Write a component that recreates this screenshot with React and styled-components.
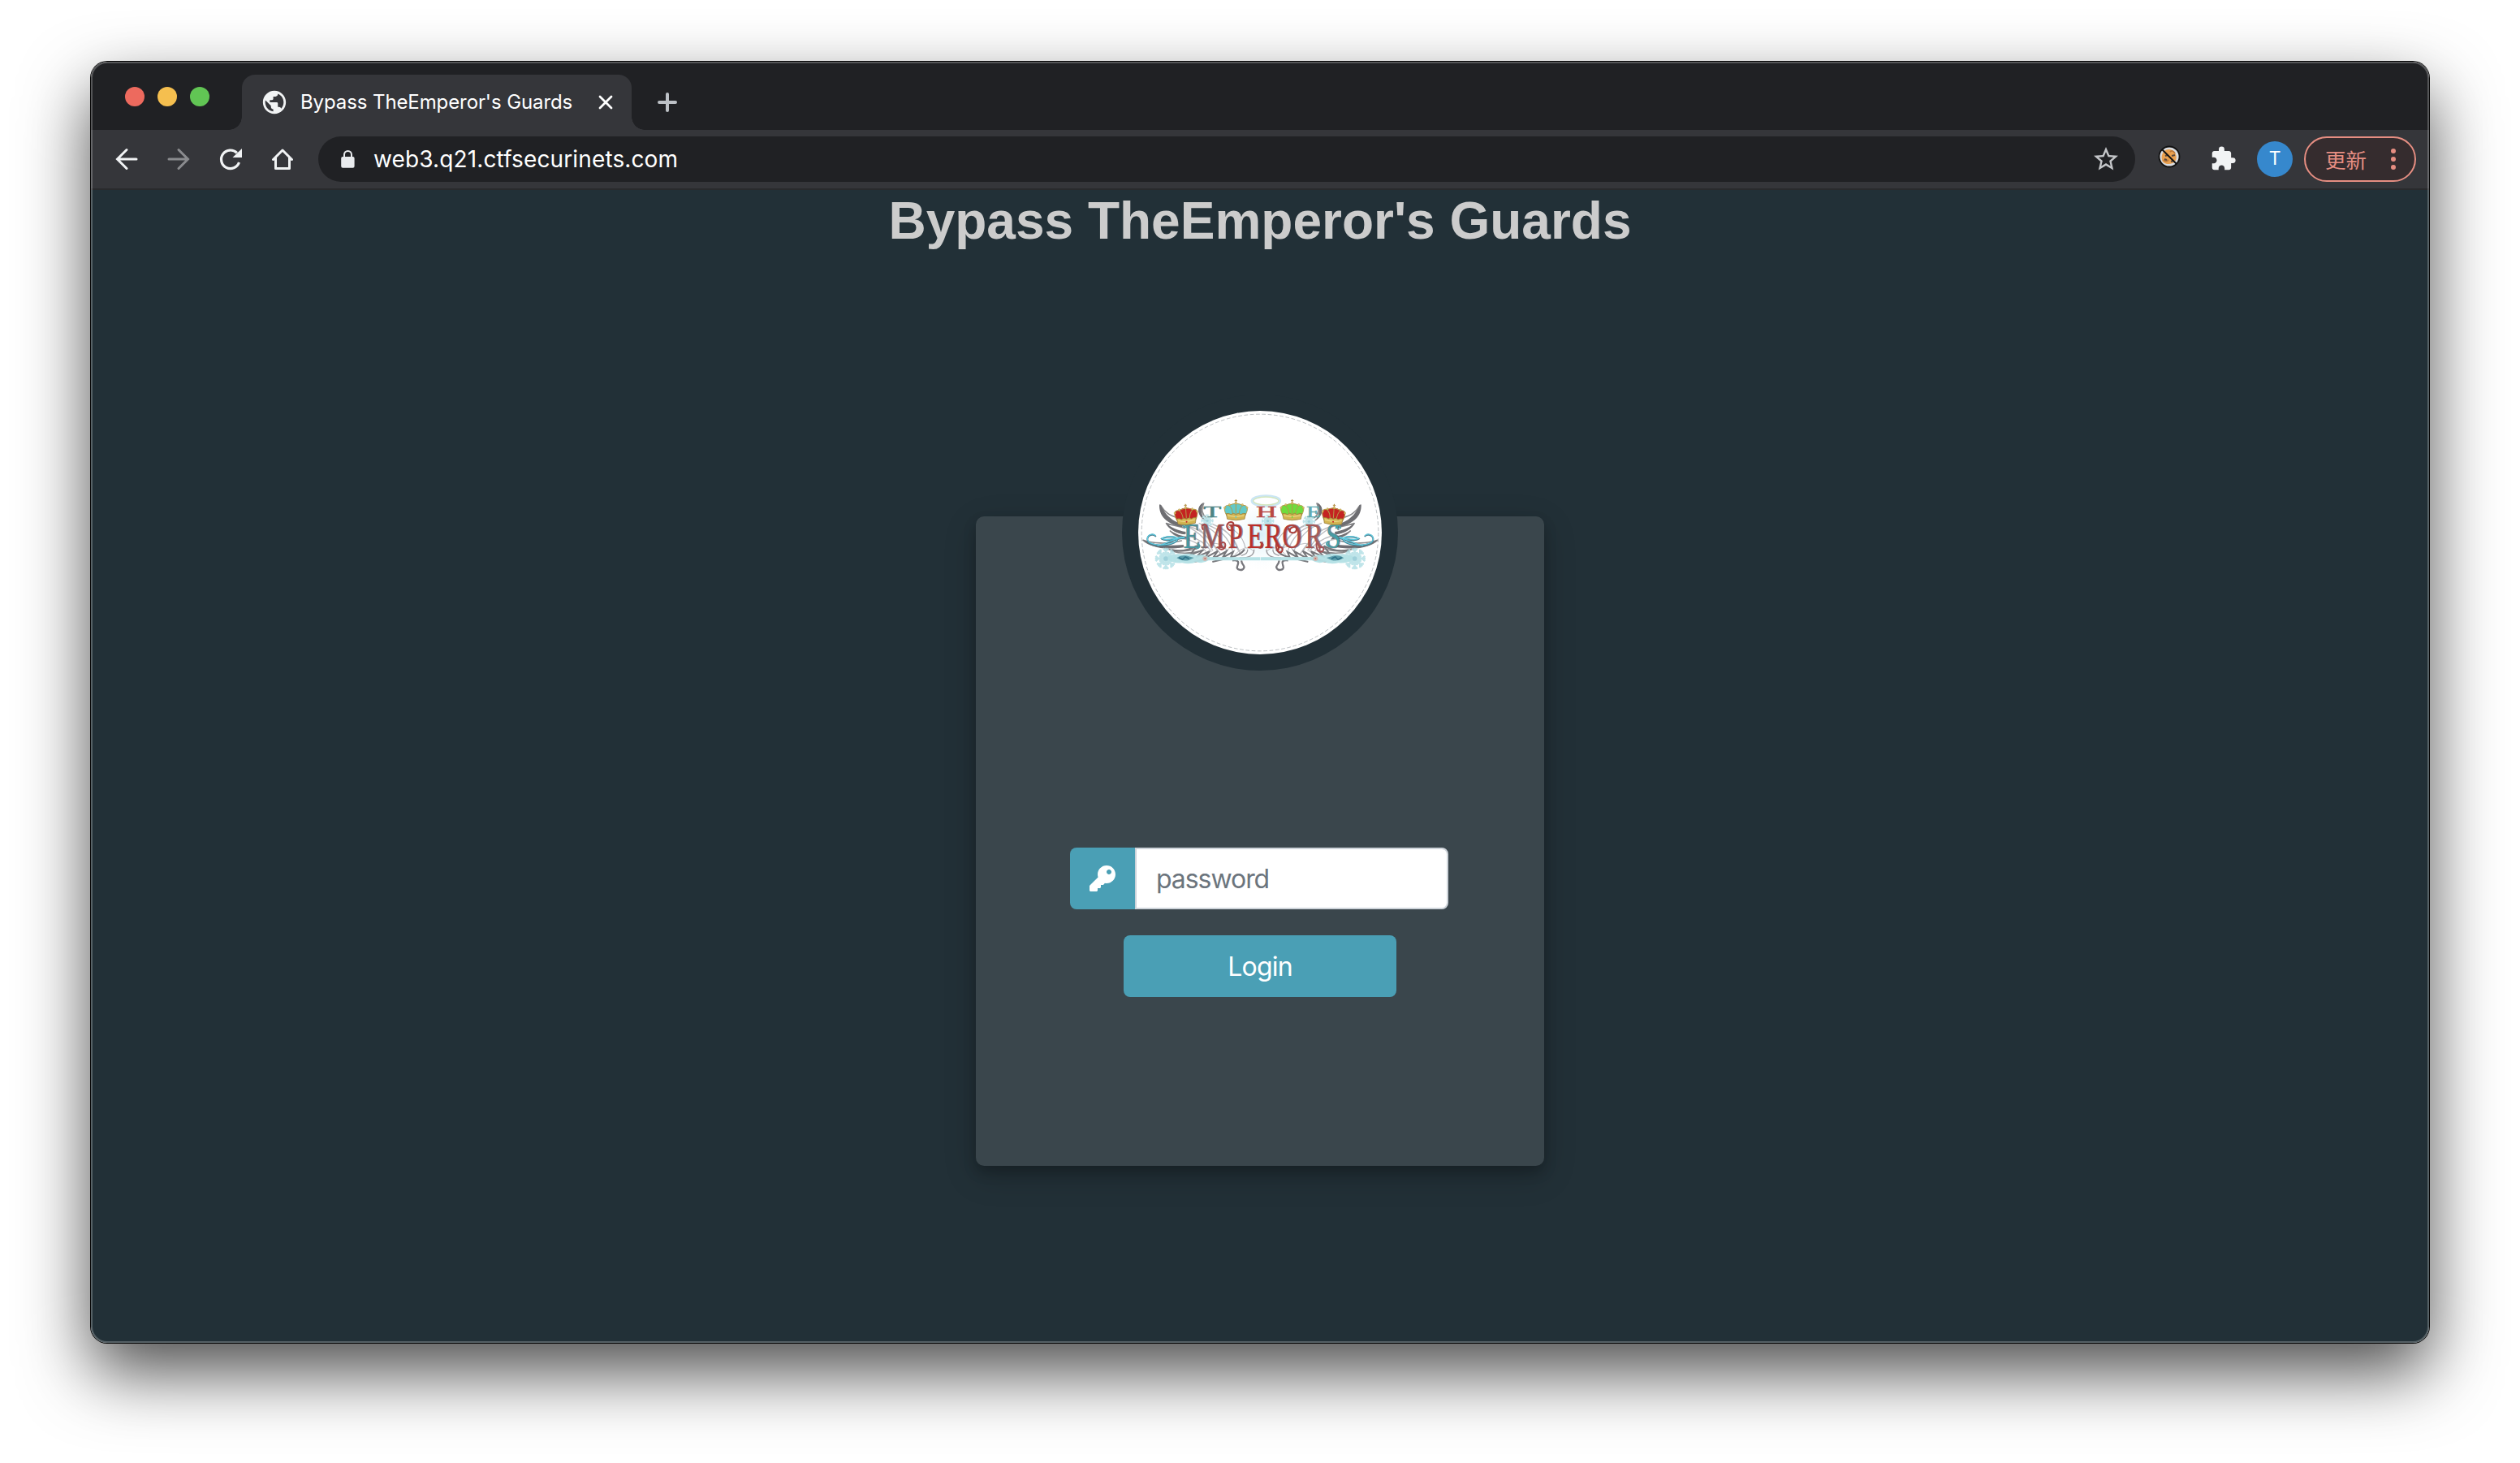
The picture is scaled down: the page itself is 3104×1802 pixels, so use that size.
import React from "react";
import styled, { createGlobalStyle } from "styled-components";
import { MdPublic, MdExtension, MdStarBorder } from "react-icons/md";
import { FaKey } from "react-icons/fa";

const ui = `Inter, "Liberation Sans", sans-serif`;

const GlobalStyle = createGlobalStyle`
  * { box-sizing: border-box; }
  body { margin: 0; background: #fff; }
`;

const Desktop = styled.div`
  width: 3104px;
  height: 1802px;
  padding: 76px 112px 148px;
  background: #fff;
  overflow: hidden;
`;

const BrowserWindow = styled.div`
  position: relative;
  display: flex;
  flex-direction: column;
  height: 1578px;
  border-radius: 20px;
  box-shadow: 0 0 0 1px #050505, 0 36px 84px rgba(0, 0, 0, 0.7);
  &::after {
    content: "";
    position: absolute;
    inset: 0;
    border: 2px solid rgba(255, 255, 255, 0.24);
    border-radius: 20px;
    pointer-events: none;
  }
`;

const TabStrip = styled.div`
  display: flex;
  align-items: flex-start;
  height: 84px;
  padding-left: 42px;
  background: #202124;
  border-radius: 20px 20px 0 0;
`;

const Lights = styled.div`
  display: flex;
  gap: 16px;
  padding-top: 31px;
  margin-right: 40px;
`;

const Light = styled.span`
  width: 24px;
  height: 24px;
  border-radius: 50%;
  background: ${(p) => p.$color};
`;

const Tab = styled.div`
  position: relative;
  display: flex;
  align-items: center;
  width: 480px;
  height: 68px;
  margin-top: 16px;
  padding-left: 23px;
  border-radius: 16px 16px 0 0;
  background: #35363a;
  color: #f1f3f4;
  &::before,
  &::after {
    content: "";
    position: absolute;
    bottom: 0;
    width: 16px;
    height: 16px;
  }
  &::before {
    left: -16px;
    background: radial-gradient(circle at 0 0, transparent 15.5px, #35363a 16px);
  }
  &::after {
    right: -16px;
    background: radial-gradient(circle at 100% 0, transparent 15.5px, #35363a 16px);
  }
  & > svg { display: block; flex: none; }
`;

const TabTitle = styled.span`
  width: 335px;
  margin: 0 32px 0 15px;
  font: 400 24px/30px ${ui};
  letter-spacing: -0.1px;
  color: #fff;
  white-space: nowrap;
`;

const NewTab = styled.div`
  display: flex;
  margin: 38px 0 0 32px;
`;

const Toolbar = styled.div`
  display: flex;
  align-items: center;
  height: 74px;
  padding: 0 16px 0 28px;
  background: #35363a;
  border-bottom: 2px solid #292a2c;
`;

const NavButton = styled.span`
  display: flex;
  justify-content: center;
  width: 32px;
  margin-right: 32px;
  opacity: ${(p) => (p.$dim ? 0.45 : 1)};
  &:last-of-type { margin-right: 28px; }
`;

const AddressBar = styled.div`
  display: flex;
  align-items: center;
  flex: none;
  width: 2238px;
  height: 56px;
  padding: 0 18px 0 28px;
  border-radius: 28px;
  background: #202124;
`;

const Url = styled.span`
  flex: 1;
  margin-left: 23px;
  font: 400 28px/36px ${ui};
  letter-spacing: 0.13px;
  color: #fff;
`;

const Actions = styled.div`
  display: flex;
  align-items: center;
  flex: 1;
  padding-left: 28px;
`;

const ExtensionIcon = styled.span`
  display: flex;
  margin-right: ${(p) => p.$gap}px;
  transform: translateY(${(p) => p.$lift || 0}px);
`;

const Profile = styled.span`
  display: flex;
  align-items: center;
  justify-content: center;
  flex: none;
  width: 44px;
  height: 44px;
  margin-right: 14px;
  border-radius: 50%;
  background: #3688cd;
  font: 400 23px/44px Roboto, sans-serif;
  color: #fff;
`;

const UpdateButton = styled.div`
  display: flex;
  align-items: center;
  justify-content: space-between;
  flex: none;
  width: 138px;
  height: 56px;
  padding: 0 23px 0 24px;
  border: 2px solid #e68e82;
  border-radius: 28px;
  background: #352c2e;
  font: 400 25.5px/50px "Noto Sans CJK SC", sans-serif;
  color: #e68e82;
`;

const Dots = styled.span`
  display: grid;
  gap: 4px;
  i {
    width: 6px;
    height: 6px;
    border-radius: 50%;
    background: #e68e82;
  }
`;

const Page = styled.main`
  display: flex;
  flex-direction: column;
  align-items: center;
  flex: 1;
  border-radius: 0 0 20px 20px;
  background: #223037;
`;

const Heading = styled.h1`
  margin: 0;
  font: 700 64px/76px "Liberation Sans", Arial, sans-serif;
  color: #ccc;
  white-space: nowrap;
`;

const Card = styled.section`
  display: flex;
  flex-direction: column;
  align-items: center;
  width: 700px;
  height: 800px;
  margin-top: 326px;
  border-radius: 10px;
  background: #3a464c;
  box-shadow: 0 8px 16px rgba(0, 0, 0, 0.2), 0 12px 40px rgba(0, 0, 0, 0.19);
`;

const LogoRing = styled.div`
  width: 340px;
  height: 340px;
  margin-top: -150px;
  padding: 20px;
  border-radius: 50%;
  background: #223037;
  svg { display: block; border-radius: 50%; background: #fff; }
`;

const Field = styled.div`
  display: flex;
  width: 466px;
  height: 76px;
  margin: 218px 2px 32px 0;
`;

const KeyBox = styled.span`
  display: flex;
  align-items: center;
  justify-content: center;
  width: 80px;
  border-radius: 8px 0 0 8px;
  background: #4a9fb5;
  color: #fff;
`;

const PasswordInput = styled.input`
  flex: 1;
  min-width: 0;
  padding: 2px 24px 0;
  border: 2px solid #ced4da;
  border-radius: 0 8px 8px 0;
  background: #fff;
  font: 400 32px/48px ${ui};
  letter-spacing: -1.05px;
  outline: 0;
  &::placeholder { color: #6c757d; opacity: 1; }
`;

const LoginButton = styled.button`
  width: 336px;
  height: 76px;
  padding: 2px 0 0;
  border: 0;
  border-radius: 8px;
  background: #4a9fb5;
  font: 400 32px/48px ${ui};
  letter-spacing: -0.8px;
  color: #fff;
`;

const Stroke = ({ d, size = 32, color = "#f1f3f4", width = 3 }) => (
  <svg width={size} height={size} viewBox={`0 0 ${size} ${size}`} fill="none" stroke={color} strokeWidth={width} strokeLinecap="round">
    <path d={d} />
  </svg>
);

const Reload = () => (
  <svg width="32" height="32" viewBox="0 0 32 32" fill="none">
    <path d="M26.500 20A11.300 11.300 0 1 1 23.800 8.300" stroke="#f1f3f4" strokeWidth="3.200" />
    <path d="M30 3v11H18.500z" fill="#f1f3f4" />
  </svg>
);

const Home = () => (
  <svg width="32" height="32" viewBox="0 0 32 32" fill="none" stroke="#f1f3f4" strokeWidth="3" strokeLinejoin="round" strokeLinecap="round">
    <path d="M4.500 16.500 16 5l11.500 11.500M7.500 14.500v13h17v-13" />
  </svg>
);

const Lock = () => (
  <svg width="17" height="22" viewBox="0 0 17 22">
    <path d="M4 9V5.500a4.500 4.500 0 0 1 9 0V9" fill="none" stroke="#e8eaed" strokeWidth="2" />
    <rect x="0.200" y="8" width="16.400" height="13.700" rx="2" fill="#e8eaed" />
  </svg>
);

const Cookie = () => (
  <svg width="28" height="28" viewBox="0 0 28 28">
    <circle cx="14" cy="14" r="12.500" fill="#d9dce0" stroke="#111" strokeWidth="1.800" />
    <path d="M7 8c3-4 11-4 14 1s2 11-3 13-12 1-13-4 0-7 2-10z" fill="#e9a04f" />
    <path d="M7 18q3 3 6 0M15 8q3-3 6 2" stroke="#b9773a" strokeWidth="1.800" fill="none" />
    <path d="M9 13l3-1M17 13l4-1M8 17l3 1M16 20l3-1" stroke="#5b4b40" strokeWidth="2" />
    <path d="M5 5l18 18" stroke="#111" strokeWidth="2" />
  </svg>
);

const Crown = ({ x, y, jewel, turn = 0 }) => (
  <g transform={`translate(${x} ${y}) rotate(${turn})`}>
    <path d="M-32 24C-50-4-42-20-24-16-15-27 15-27 24-16 42-20 50-4 32 24z" fill={jewel} />
    <g fill="none" stroke="#b59a4a" strokeWidth="3">
      <path d="M-32 24C-50-4-42-20-25-16-15-8-12 5-12 20M32 24C50-4 42-20 25-16 15-8 12 5 12 20M-24-17Q0-29 24-17M0-25v40" />
    </g>
    <path d="M-36 14q9-3 18 3 9-8 18 0 9-8 18 0 9-6 18-3l-4 20q-32 9-64 0z" fill="#d3b552" stroke="#8f7436" strokeWidth="2" />
    <path d="M-31 21q31 9 62 0" stroke="#efdf95" strokeWidth="3" fill="none" />
    <path d="M0-39v14M-5-34H5" stroke="#b18b3d" strokeWidth="3" />
    <g fill="#e0c66e" stroke="#9e7e35" strokeWidth="1">
      <circle cx="-41" cy="-8" r="3.500" /><circle cx="-24" cy="-19" r="3.500" /><circle cy="-25" r="4" />
      <circle cx="24" cy="-19" r="3.500" /><circle cx="41" cy="-8" r="3.500" />
    </g>
    <circle cy="27" r="3" fill={jewel} />
  </g>
);

const Snowflake = ({ x, y, r }) => (
  <g transform={`translate(${x} ${y}) scale(${r / 40})`} stroke="#b4e0e6" fill="none" opacity="0.85">
    <circle r="24" fill="#d2ecf0" stroke="none" />
    {[0, 45, 90, 135, 180, 225, 270, 315].map((a) => (
      <path key={a} transform={`rotate(${a})`} strokeWidth="7" d="M0 0v-37M-9-35 0-26l9-9M-10-21 0-11l10-10" />
    ))}
    <circle r="8" fill="#8fc8d4" stroke="none" />
  </g>
);

const Wing = () => (
  <g>
    <g fill="none" stroke="#8a8a8c" strokeWidth="5" strokeLinecap="round">
      <path d="M148 398c2 36 24 60 78 76M149 398c16 27 35 37 65 46M170 464c15 26 40 32 70 37M170 464c26 8 45 10 68 17M184 492c20 22 44 26 70 30M308 390c-24 14-20 44 5 62M308 390c-10 24-8 38 10 54" />
      <path d="M84 526c23 20 66 32 150 24M84 526c34 12 90 16 142 2M160 552c35 18 78 18 122 6M190 566c36 12 80 8 118-4" />
    </g>
    <path d="M144 394c-2 42 26 72 84 84l6-10c-42-11-68-34-84-72zM166 461c16 26 40 40 72 44l4-10c-28-5-54-15-76-34zM83 524c24 29 82 40 149 28l2-9c-66 6-114 0-151-19zM306 388c-26 14-22 46 4 62-12-22-14-40-4-62zM184 490c16 20 40 32 68 33v-9c-26-3-48-10-68-24z" fill="#6e6e72" />
    <g fill="none" stroke="#bcbcc0" strokeWidth="4">
      <path d="M226 466c56 22 84 49 116 99M248 474c54 12 82 44 112 94M290 463c53 19 82 51 103 103M322 470c49 16 78 48 94 98M356 472c44 20 65 51 79 91M398 475c34 18 56 40 64 80M252 510c36 10 65 29 85 59M225 520c40 4 72 23 91 48M290 484c34 35 50 45 80 94M340 466c70 32 88 60 103 116" />
      <path d="M310 560q42-42 78-5M380 580q36-54 66-10M422 580q43-44 70-14" strokeWidth="3" />
    </g>
    <path d="M190 562q48 10 92-15l-24 34 48-19-27 27 51-22-23 28 53-29-20 29 52-28-15 24 40-22-9 20q35-6 51-29M272 606l60-12M340 606l60-14" fill="none" stroke="#77777b" strokeWidth="6" />
    <path d="M494 560c1 24-23 33-54 31M470 560q3 17-23 23" fill="none" stroke="#9c9ca0" strokeWidth="4" />
    <path d="M414 601c30-3 21 12 18 22-6 14 22 18 25 5 3-9-8-10-10-27" fill="none" stroke="#77777c" strokeWidth="7" />
    <path d="M130 511c-10-10-28-4-30 9-2 17 19 24 40 25 50 2 88-18 62-29-18-6-42 1-49 5 18 14 60-7 84-4M138 547c36-4 54-28 96-28" fill="none" stroke="#4a7f90" strokeWidth="6" strokeLinecap="round" />
    <path d="M130 509c-10-10-28-4-30 9-2 17 19 24 40 25 50 2 88-18 62-29-18-6-42 1-49 5 18 14 60-7 84-4M138 545c36-4 54-28 96-28" fill="none" stroke="#62cde2" strokeWidth="3.500" strokeLinecap="round" />
    <Snowflake x={168} y={594} r={43} />
    <path d="M176 585q25-12 52-7 32-5 54 4 28-6 44 6l190 1v12H326q-24 14-44 5-24 11-54 4-30 4-52-13z" fill="#b3e0e5" opacity="0.95" />
    <path d="M208 592q18-15 50-5l14 4-18 9q-24 6-46-8z" fill="#5a9dab" />
    <path d="M216 590l14 7 10-9 14 7" stroke="#2e7187" strokeWidth="5" fill="none" />
    <circle cx="313" cy="594" r="9" fill="#cbb9b4" />
    <circle cx="313" cy="594" r="3" fill="#cf6f5f" />
  </g>
);

const Letters = ({ fill, dx = 0, opacity = 1, weight = 0 }) => (
  <g opacity={opacity} transform={`translate(${dx} 0)`} fontFamily="Liberation Serif, serif">
    <text transform="scale(.74 1)" y="556" x="314 399 537 632 719 808 922 1026" fontSize="134" fill={fill} stroke={fill} strokeWidth={weight}>EMPERORS</text>
  </g>
);

const EmperorsLogo = () => (
  <svg width="300" height="300" viewBox="66 48 900 900">
    <defs>
      <linearGradient id="word" gradientUnits="userSpaceOnUse" x1="320" x2="1110" y1="0" y2="0">
        <stop offset="0" stopColor="#419ba6" />
        <stop offset="0.080" stopColor="#4e8f98" />
        <stop offset="0.150" stopColor="#96595c" />
        <stop offset="0.300" stopColor="#ae3f3c" />
        <stop offset="0.480" stopColor="#c02723" />
        <stop offset="0.700" stopColor="#ab4340" />
        <stop offset="0.860" stopColor="#a4605f" />
        <stop offset="0.910" stopColor="#4e969e" />
        <stop offset="1" stopColor="#3ba6b2" />
      </linearGradient>
      <radialGradient id="glow">
        <stop offset="0" stopColor="#d9f0f8" />
        <stop offset="1" stopColor="#fff" stopOpacity="0" />
      </radialGradient>
    </defs>
    <circle cx="516" cy="498" r="437.500" fill="none" stroke="#adb2b6" strokeWidth="2.500" strokeDasharray="14 8" />
    <ellipse cx="522" cy="505" rx="118" ry="145" fill="url(#glow)" />
    <Wing />
    <g transform="translate(1034 0) scale(-1 1)"><Wing /></g>
    <ellipse cx="538" cy="381" rx="51" ry="18" fill="none" stroke="#c5e3f3" strokeWidth="11" opacity="0.900" />
    <ellipse cx="538" cy="381" rx="47" ry="15" fill="none" stroke="#d9e8a5" strokeWidth="3" />
    <Snowflake x={321} y={454} r={25} />
    <Snowflake x={545} y={455} r={25} />
    <Snowflake x={697} y={457} r={25} />
    <g fontFamily="Liberation Serif, serif" fontSize="54" strokeWidth="1.500">
      <text x="307" y="440" textLength="66" lengthAdjust="spacingAndGlyphs" fill="#4f8585" stroke="#4f8585">T</text>
      <text x="502" y="440" textLength="76" lengthAdjust="spacingAndGlyphs" fill="#b94845" stroke="#b94845">H</text>
      <text x="688" y="440" textLength="52" lengthAdjust="spacingAndGlyphs" fill="#62aab0" stroke="#62aab0">E</text>
    </g>
    <Letters fill="#5f5055" dx={3} opacity={0.7} weight={2} />
    <Letters fill="url(#word)" />
    <g fill="none" strokeWidth="6" strokeLinecap="round">
      <path d="M246 477c-20 4-18-19-5-16M287 540c12 8 0 22-8 12" stroke="#4e9ca5" />
      <path d="M305 486c-11-19 11-25 14-10M376 549c-14-15 13-23 12-4-1 17-19 18-25 10" stroke="#a7494b" />
      <path d="M416 488c-24 10-31-27-8-29 14 0 13 18 1 16M518 535c18 3 5 27-8 17" stroke="#a93c39" />
      <path d="M576 536c-4 40 24 42 23 24-1-13-18-9-15 1M627 495c-5-18 25-26 24-8-1 18-28 14-29-4" stroke="#ab3c38" />
      <path d="M725 538c-4 35 26 38 26 20-1-12-18-8-14 2" stroke="#a55356" />
      <path d="M813 481c-2-14-18-10-15 0M770 547c-12-3-8-17 1-15" stroke="#43a2ad" />
    </g>
    <Crown x={243} y={431} jewel="#c42321" turn={-4} />
    <Crown x={427} y={414} jewel="#62c9c8" />
    <Crown x={635} y={414} jewel="#6fdc3d" />
    <Crown x={788} y={431} jewel="#c42321" turn={4} />
  </svg>
);

export default function App() {
  return (
    <Desktop>
      <GlobalStyle />
      <BrowserWindow>
        <TabStrip>
          <Lights>
            <Light $color="#ed6a5e" />
            <Light $color="#f5bf4f" />
            <Light $color="#61c554" />
          </Lights>
          <Tab>
            <MdPublic size={34} />
            <TabTitle>Bypass TheEmperor's Guards</TabTitle>
            <Stroke size={18} width={2.8} color="#fff" d="M2 2l14 14M16 2L2 16" />
          </Tab>
          <NewTab>
            <Stroke size={24} width={4} color="#bdc1c6" d="M12 2v20M2 12h20" />
          </NewTab>
        </TabStrip>
        <Toolbar>
          <NavButton><Stroke d="M28 16H5M16 4.500L4.500 16 16 27.500" /></NavButton>
          <NavButton $dim><Stroke d="M4 16h23M16 4.500L27.500 16 16 27.500" /></NavButton>
          <NavButton><Reload /></NavButton>
          <NavButton><Home /></NavButton>
          <AddressBar>
            <Lock />
            <Url>web3.q21.ctfsecurinets.com</Url>
            <MdStarBorder size={36} color="#c4c6c9" />
          </AddressBar>
          <Actions>
            <ExtensionIcon $gap={36} $lift={-3}><Cookie /></ExtensionIcon>
            <ExtensionIcon $gap={25} $lift={-1}><MdExtension size={33} color="#f1f3f4" /></ExtensionIcon>
            <Profile>T</Profile>
            <UpdateButton>
              更新
              <Dots><i /><i /><i /></Dots>
            </UpdateButton>
          </Actions>
        </Toolbar>
        <Page>
          <Heading>Bypass TheEmperor's Guards</Heading>
          <Card>
            <LogoRing><EmperorsLogo /></LogoRing>
            <Field>
              <KeyBox><FaKey size={32} /></KeyBox>
              <PasswordInput placeholder="password" />
            </Field>
            <LoginButton>Login</LoginButton>
          </Card>
        </Page>
      </BrowserWindow>
    </Desktop>
  );
}
